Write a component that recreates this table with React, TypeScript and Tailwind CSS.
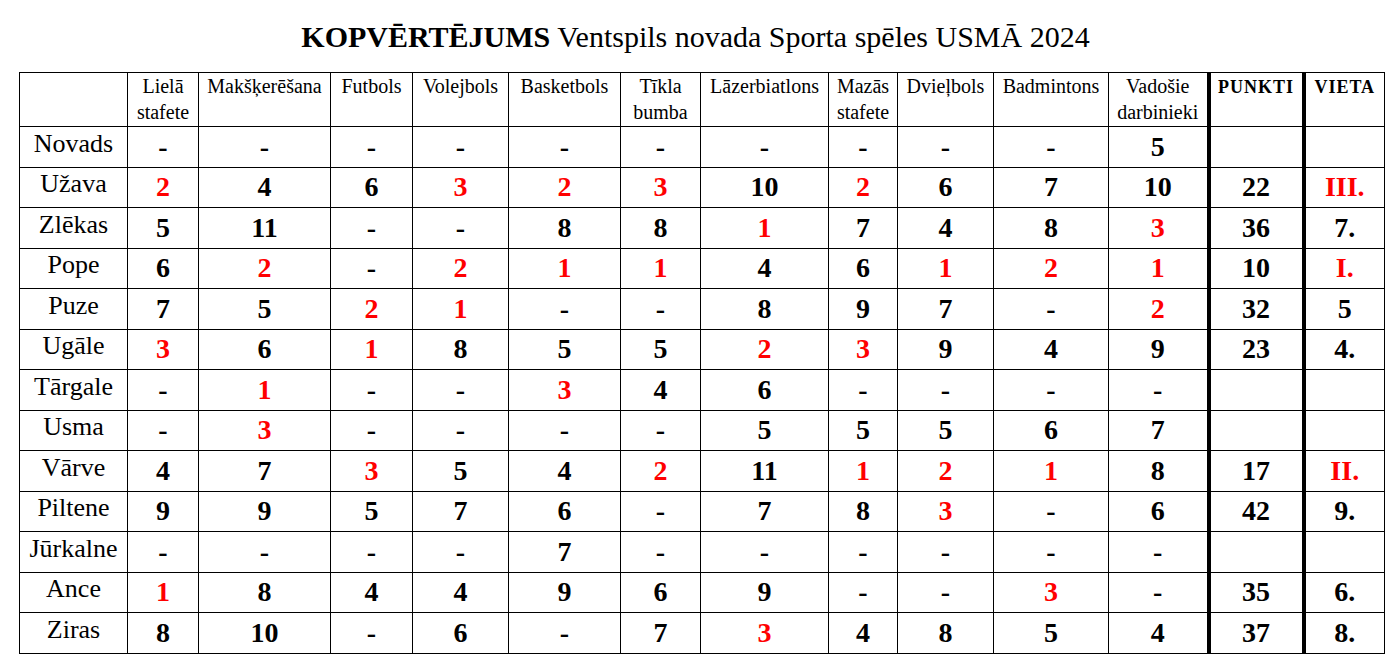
import React from 'react'

type Cell = string

const columns = [
  'Lielā stafete',
  'Makšķerēšana',
  'Futbols',
  'Volejbols',
  'Basketbols',
  'Tīkla bumba',
  'Lāzerbiatlons',
  'Mazās stafete',
  'Dvieļbols',
  'Badmintons',
  'Vadošie darbinieki',
]

// widths line-to-line, px
const widths = [108, 71, 132, 82, 96, 112, 80, 128, 69, 96, 115, 100, 95, 81]

const rows: [string, Cell[]][] = [
  ['Novads', ['-', '-', '-', '-', '-', '-', '-', '-', '-', '-', '5', '', '']],
  ['Užava', ['2', '4', '6', '3', '2', '3', '10', '2', '6', '7', '10', '22', 'III.']],
  ['Zlēkas', ['5', '11', '-', '-', '8', '8', '1', '7', '4', '8', '3', '36', '7.']],
  ['Pope', ['6', '2', '-', '2', '1', '1', '4', '6', '1', '2', '1', '10', 'I.']],
  ['Puze', ['7', '5', '2', '1', '-', '-', '8', '9', '7', '-', '2', '32', '5']],
  ['Ugāle', ['3', '6', '1', '8', '5', '5', '2', '3', '9', '4', '9', '23', '4.']],
  ['Tārgale', ['-', '1', '-', '-', '3', '4', '6', '-', '-', '-', '-', '', '']],
  ['Usma', ['-', '3', '-', '-', '-', '-', '5', '5', '5', '6', '7', '', '']],
  ['Vārve', ['4', '7', '3', '5', '4', '2', '11', '1', '2', '1', '8', '17', 'II.']],
  ['Piltene', ['9', '9', '5', '7', '6', '-', '7', '8', '3', '-', '6', '42', '9.']],
  ['Jūrkalne', ['-', '-', '-', '-', '7', '-', '-', '-', '-', '-', '-', '', '']],
  ['Ance', ['1', '8', '4', '4', '9', '6', '9', '-', '-', '3', '-', '35', '6.']],
  ['Ziras', ['8', '10', '-', '6', '-', '7', '3', '4', '8', '5', '4', '37', '8.']],
]

function isRed(value: string, col: number) {
  if (col === 11) return false
  if (col === 12) return value === 'I.' || value === 'II.' || value === 'III.'
  return value === '1' || value === '2' || value === '3'
}

export default function App() {
  return (
    <div className="min-h-screen bg-white font-['Liberation_Serif','Times_New_Roman',serif] text-black">
      <h1 className="pt-[19px] text-center text-[30px] leading-[36px] font-normal">
        <span className="font-bold">KOPVĒRTĒJUMS</span> Ventspils novada Sporta spēles USMĀ 2024
      </h1>

      <table className="ml-[19px] mt-[17px] table-fixed border-collapse">
        <colgroup>
          {widths.map((w, i) => (
            <col key={i} style={{ width: w }} />
          ))}
        </colgroup>
        <thead>
          <tr className="h-[54px]">
            <th className="border border-black p-0" />
            {columns.map((c) => (
              <th
                key={c}
                className="border border-black p-0 align-top text-[20px] leading-[26px] font-normal"
              >
                {c.split(' ').map((w) => (
                  <div key={w}>{w}</div>
                ))}
              </th>
            ))}
            <th className="border border-l-4 border-black p-0 pt-[1px] align-top text-[18px] leading-[26px] font-bold tracking-[1px]">
              PUNKTI
            </th>
            <th className="border border-l-4 border-black p-0 pt-[1px] align-top text-[18px] leading-[26px] font-bold tracking-[1px]">
              VIETA
            </th>
          </tr>
        </thead>
        <tbody>
          {rows.map(([name, cells]) => (
            <tr key={name} className="h-[40.5px]">
              <td className="border border-black p-0 pb-[6px] text-center align-middle text-[26px] leading-[30px]">
                {name}
              </td>
              {cells.map((v, i) => (
                <td
                  key={i}
                  className={`border border-black p-0 text-center align-middle text-[28px] leading-[32px] font-bold ${
                    i >= 11 ? 'border-l-4' : ''
                  } ${isRed(v, i) ? 'text-[#ff0000]' : 'text-black'}`}
                >
                  {v}
                </td>
              ))}
            </tr>
          ))}
        </tbody>
      </table>
    </div>
  )
}
